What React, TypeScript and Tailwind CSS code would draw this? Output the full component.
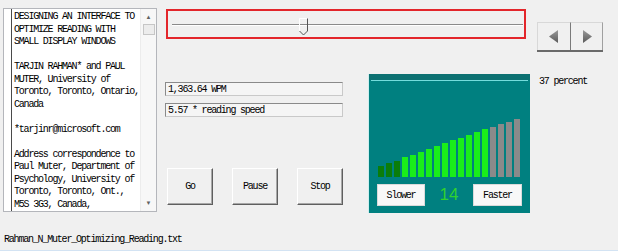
import React from 'react';

const lines = [
  'DESIGNING AN INTERFACE TO',
  'OPTIMIZE READING WITH',
  'SMALL DISPLAY WINDOWS',
  '',
  'TARJIN RAHMAN* and PAUL',
  'MUTER, University of',
  'Toronto, Toronto, Ontario,',
  'Canada',
  '',
  '*tarjinr@microsoft.com',
  '',
  'Address correspondence to',
  'Paul Muter, Department of',
  'Psychology, University of',
  'Toronto, Toronto, Ont.,',
  'M5S 3G3, Canada,',
];

// speed meter: 3 slow, 11 active, 4 inactive
const bars = [11, 14, 16, 20, 22, 25, 28, 31, 34, 37, 39, 42, 45, 48, 50, 53, 55, 58].map((h, i) => ({
  h,
  color: i < 3 ? '#0a7d0a' : i < 14 ? '#1aee1a' : '#8a8a8a',
}));

const mono = "font-['Liberation_Mono',monospace] text-[10px] tracking-[-1.2px] text-black";

const ClassicButton: React.FC<{ label: string }> = ({ label }) => (
  <button
    className={`w-[46px] h-[37px] bg-[#f0f0f0] border border-t-white border-l-white border-b-[#5f5f5f] border-r-[#5f5f5f] shadow-[inset_-1px_-1px_0_#a8a8a8] flex items-center justify-center ${mono}`}
  >
    {label}
  </button>
);

const Field: React.FC<{ value: string }> = ({ value }) => (
  <div
    className={`w-[178px] h-[14px] bg-[#f5f5f5] border border-t-[#8a8a8a] border-l-[#8a8a8a] border-b-[#c9c9c9] border-r-[#c9c9c9] flex items-center pl-[2px] ${mono}`}
  >
    {value}
  </div>
);

const Triangle: React.FC<{ dir: 'left' | 'right' }> = ({ dir }) => (
  <svg width="10" height="13" viewBox="0 0 10 13">
    <defs>
      <linearGradient id={`tri-${dir}`} x1="0" y1="0" x2="0" y2="1">
        <stop offset="0" stopColor="#9a9a9a" />
        <stop offset="1" stopColor="#5a5a5a" />
      </linearGradient>
    </defs>
    <polygon points={dir === 'left' ? '9,0 9,13 0,6.5' : '1,0 1,13 10,6.5'} fill={`url(#tri-${dir})`} />
  </svg>
);

export default function App() {
  return (
    <div className="w-[618px] h-[251px] bg-[#f0f0f0] flex flex-col overflow-hidden border-b border-[#d3e3f3]">
      <div className="flex h-[213px]">
        {/* Text document */}
        <div className="ml-[3px] mt-[8px] w-[154px] h-[204px] bg-white border border-[#b4b6bb] flex">
          <div className="w-[7px]" />
          <div className="flex-1 border-l border-[#4a4a4a] pl-[2px] pt-[2px]">
            {lines.map((l, i) => (
              <div key={i} className={`h-[12.5px] leading-[12.5px] whitespace-pre ${mono}`}>
                {l}
              </div>
            ))}
          </div>
          <div className="w-[16px] bg-[#f7f7f7] border-l border-[#ececec] flex flex-col items-center">
            <div className="mt-[4px] text-[6px] leading-[8px] text-[#606060]">▲</div>
            <div className="mt-[3px] w-[12px] h-[11px] bg-[#ececec] border border-[#c6c6c6]" />
            <div className="flex-1" />
            <div className="mb-[4px] text-[6px] leading-[8px] text-[#606060]">▼</div>
          </div>
        </div>

        {/* Controls */}
        <div className="flex flex-col">
          <div className="flex h-[52px] items-start">
            <div className="ml-[9px] mt-[9px] w-[360px] h-[30px] border-2 border-[#e3262b] relative">
              <div className="ml-[4px] mr-[1px] mt-[13px] h-[1px] bg-[#8a8a8a] border-b border-white box-content" />
              <svg className="absolute left-[130px] top-[6px]" width="12" height="20" viewBox="0 0 12 20">
                <path d="M1.5 14 V1.5 H9.5" fill="none" stroke="#ffffff" strokeWidth="1" />
                <path d="M9.5 1.5 V14 L5.5 18 L1.5 14" fill="none" stroke="#555" strokeWidth="1" />
              </svg>
            </div>
            <div className="ml-[11px] mt-[22px] flex h-[30px] border-b-2 border-[#6a6a6a]">
              <button className="w-[34px] h-full bg-[#f0f0f0] border-l border-t border-[#d8d8d8] border-r border-r-[#7a7a7a] flex items-center justify-center">
                <Triangle dir="left" />
              </button>
              <button className="w-[32px] h-full bg-[#f0f0f0] border-t border-[#d8d8d8] border-r border-r-[#a0a0a0] flex items-center justify-center">
                <Triangle dir="right" />
              </button>
            </div>
          </div>

          <div className="flex mt-[22px]">
            <div className="ml-[8px] pt-[8px] flex flex-col">
              <div className="flex flex-col gap-[7px]">
                <Field value="1,363.64 WPM" />
                <Field value="5.57 * reading speed" />
              </div>
              <div className="mt-[51px] flex gap-[19px] pl-[2px]">
                <ClassicButton label="Go" />
                <ClassicButton label="Pause" />
                <ClassicButton label="Stop" />
              </div>
            </div>

            {/* Speed meter */}
            <div className="ml-[25px] w-[162px] h-[139px] bg-[#008080] flex flex-col border-l border-[#cdeeee]">
              <div className="h-[6px] bg-[#0d7172]" />
              <div className="mx-[2px] h-[1px] bg-[#74dcdc]" />
              <div className="flex-1 flex flex-col justify-end px-[8px] pb-[7px]">
                <div className="flex items-end gap-[2px] pl-[1px]">
                  {bars.map((b, i) => (
                    <div key={i} className="w-[6px]" style={{ height: b.h, backgroundColor: b.color }} />
                  ))}
                </div>
                <div className="mt-[7px] h-[22px] flex items-center justify-between">
                  <div className={`w-[48px] h-[22px] bg-[#f8f8f8] border border-[#dadada] flex items-center justify-center ${mono}`}>
                    Slower
                  </div>
                  <div className="font-['Liberation_Sans',Arial,sans-serif] text-[17px] text-[#2fd12f]">14</div>
                  <div className={`w-[49px] h-[22px] bg-[#f8f8f8] border border-[#dadada] flex items-center justify-center ${mono}`}>
                    Faster
                  </div>
                </div>
              </div>
            </div>

            <div className={`ml-[9px] whitespace-pre ${mono}`}>37 percent</div>
          </div>
        </div>
      </div>

      <div className={`pl-[4px] pt-[19px] whitespace-pre ${mono}`}>Rahman_N_Muter_Optimizing_Reading.txt</div>
    </div>
  );
}
